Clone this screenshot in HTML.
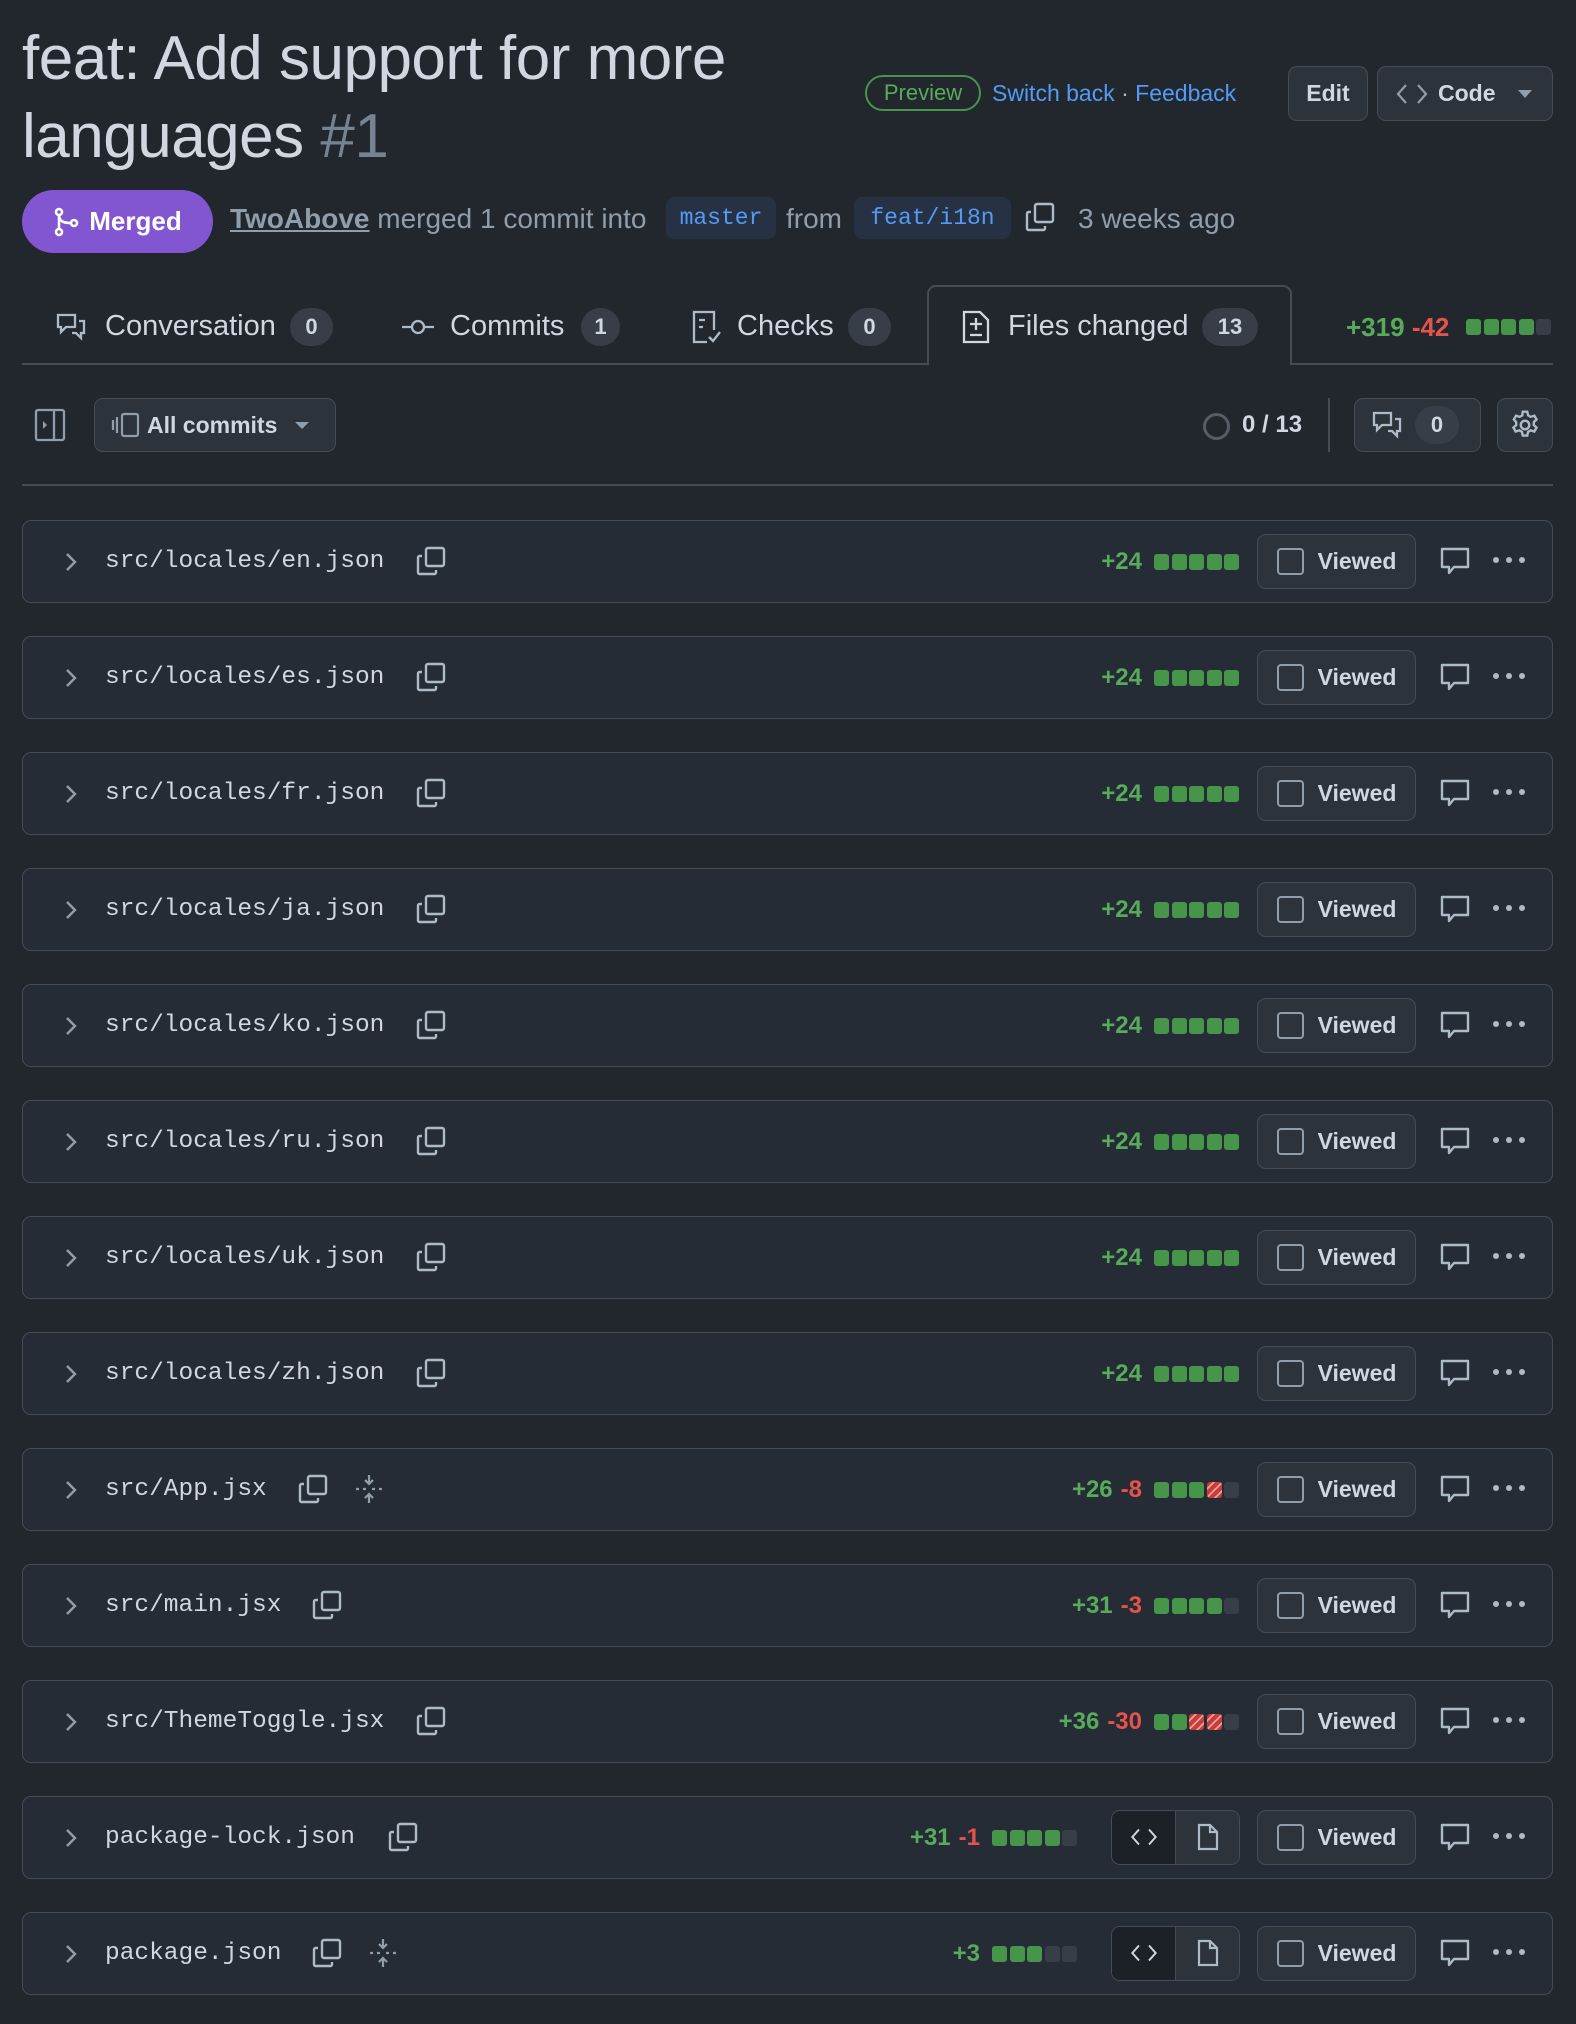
<!DOCTYPE html>
<html><head><meta charset="utf-8">
<style>
*{box-sizing:border-box;margin:0;padding:0}
body{width:1576px;height:2024px;background:#22272e;font-family:"Liberation Sans",sans-serif;color:#adbac7;position:relative;overflow:hidden}
.a{position:absolute}
.title{left:22px;top:20px;width:820px;font-size:62px;line-height:78px;color:#d1d7e0;letter-spacing:-0.5px}
.title span{color:#768390}
.pill{border-radius:999px}
.btn{border:1.5px solid #444c56;background:#2d333b;border-radius:9px;color:#d1d7e0;font-weight:bold;display:flex;align-items:center;justify-content:center}
.cnt{background:#373e47;color:#d1d7e0;border-radius:20px;font-weight:bold;font-size:22px;display:flex;align-items:center;justify-content:center;height:38px}
.mono{font-family:"Liberation Mono",monospace}
.row{position:absolute;left:22px;width:1531px;height:83px;border:1.5px solid #444c56;border-radius:9px;background:#262c35}
.row .chev{position:absolute;left:40px;top:29px}
.row .fn{position:absolute;left:82px;top:26px;font-size:24.5px;color:#d1d7e0;line-height:30px}
.row .stats{position:absolute;top:27px;display:flex;align-items:center;font-weight:bold;font-size:24px;line-height:28px}
.g{color:#57ab5a}.r{color:#e5534b;margin-left:8px}
.bar{display:flex;margin-left:12px}
.bar i{display:block;width:15px;height:16px;border-radius:3px;margin-right:2.5px;background:#46954a}
.bar i.e{background:#373e47}
.bar i.s{background:repeating-linear-gradient(135deg,#c93c37 0 4px,#e8a19e 4px 6px)}
.viewed{position:absolute;left:1234px;top:12.5px;width:159px;height:55px;font-size:23px}
.cb{width:27px;height:27px;border:2.5px solid #909dab;border-radius:4px;margin-right:14px}
.tg{position:absolute;left:1088px;top:12.5px;width:129px;height:55px;border:1.5px solid #444c56;border-radius:9px;display:flex;overflow:hidden}
.tg div{flex:1;display:flex;align-items:center;justify-content:center}
.dots{position:absolute;left:1467px;top:33px}
</style></head><body>

<div class="a title">feat: Add support for more languages <span>#1</span></div>

<div class="a pill" style="left:865px;top:75px;width:116px;height:36px;border:2px solid #46954a;color:#57ab5a;font-size:22px;display:flex;align-items:center;justify-content:center">Preview</div>
<div class="a" style="left:992px;top:78px;font-size:23px;color:#539bf5;line-height:30px">Switch back <span style="color:#adbac7">·</span> Feedback</div>
<div class="a btn" style="left:1288px;top:66px;width:80px;height:55px;font-size:23px">Edit</div>
<div class="a btn" style="left:1377px;top:66px;width:176px;height:55px;font-size:23px;justify-content:flex-start;padding-left:18px">
<svg width="32" height="24" viewBox="0 0 32 24" fill="none" stroke="#909dab" stroke-width="2.2"><path d="M10 3 2 12l8 9M22 3l8 9-8 9"/></svg>
<span style="margin-left:10px">Code</span>
<svg style="margin-left:22px" width="14" height="10" viewBox="0 0 14 10"><path d="M0 1h14L7 9z" fill="#909dab"/></svg></div>

<div class="a pill" style="left:22px;top:190px;width:191px;height:63px;background:#8256d0;color:#fff;font-weight:bold;font-size:26px;display:flex;align-items:center;justify-content:center">
<svg width="26" height="30" viewBox="0 0 26 30" fill="none" stroke="#fff" stroke-width="2.6"><circle cx="6" cy="5" r="3"/><circle cx="6" cy="25" r="3"/><circle cx="21" cy="16" r="3"/><path d="M6 8v14M6 8c0 6 4 8 12 8"/></svg>
<span style="margin-left:10px">Merged</span></div>
<div class="a" style="left:230px;top:202px;font-size:28px;line-height:34px;color:#909dab;white-space:nowrap"><span style="text-decoration:underline;font-weight:bold">TwoAbove</span> merged 1 commit into</div>
<div class="a mono" style="left:666px;top:197px;width:110px;height:42px;background:#263144;border-radius:8px;color:#539bf5;font-size:23px;display:flex;align-items:center;justify-content:center">master</div>
<div class="a" style="left:786px;top:202px;font-size:28px;line-height:34px;color:#909dab">from</div>
<div class="a mono" style="left:854px;top:197px;width:157px;height:42px;background:#263144;border-radius:8px;color:#539bf5;font-size:23px;display:flex;align-items:center;justify-content:center">feat/i18n</div>
<svg class="a" style="left:1024px;top:201px" width="32" height="32" viewBox="0 0 32 32" fill="none" stroke="#adbac7" stroke-width="2.4"><rect x="11" y="3" width="18" height="18" rx="2"/><path d="M7 11H4.5a1.5 1.5 0 0 0-1.5 1.5v15A1.5 1.5 0 0 0 4.5 29h15a1.5 1.5 0 0 0 1.5-1.5V25"/></svg>
<div class="a" style="left:1078px;top:202px;font-size:28px;line-height:34px;color:#909dab">3 weeks ago</div>

<!-- tabs -->
<div class="a" style="left:22px;top:363px;width:1531px;height:2px;background:#444c56"></div>
<div class="a" style="left:927px;top:285px;width:365px;height:80px;border:2px solid #444c56;border-bottom:none;border-radius:9px 9px 0 0;background:#22272e"></div>
<svg class="a" style="left:55px;top:311px" width="32" height="32" viewBox="0 0 32 32" fill="none" stroke="#adbac7" stroke-width="2.3"><path d="M3 4h17v12H11l-5 5v-5H3z"/><path d="M24 10h5v12h-3v5l-5-5h-4"/></svg>
<div class="a" style="left:105px;top:310px;font-size:29px;color:#d1d7e0">Conversation</div>
<div class="a cnt" style="left:290px;top:308px;width:43px">0</div>
<svg class="a" style="left:401px;top:313px" width="34" height="28" viewBox="0 0 34 28" fill="none" stroke="#adbac7" stroke-width="2.3"><circle cx="17" cy="14" r="6"/><path d="M1 14h10M23 14h10"/></svg>
<div class="a" style="left:450px;top:310px;font-size:29px;color:#d1d7e0">Commits</div>
<div class="a cnt" style="left:581px;top:308px;width:39px">1</div>
<svg class="a" style="left:690px;top:309px" width="32" height="36" viewBox="0 0 32 36" fill="none" stroke="#adbac7" stroke-width="2.3"><path d="M17 33H4V3h20v18"/><path d="M9 11h6M9 18h4M19 28l4 4 7-9"/></svg>
<div class="a" style="left:737px;top:310px;font-size:29px;color:#d1d7e0">Checks</div>
<div class="a cnt" style="left:848px;top:308px;width:43px">0</div>
<svg class="a" style="left:961px;top:309px" width="30" height="36" viewBox="0 0 30 36" fill="none" stroke="#d1d7e0" stroke-width="2.3"><path d="M3 3h16l8 8v22H3z"/><path d="M15 9v12M9 15h12M9 26h12"/></svg>
<div class="a" style="left:1008px;top:310px;font-size:29px;color:#d1d7e0">Files changed</div>
<div class="a cnt" style="left:1202px;top:308px;width:56px">13</div>
<div class="a" style="left:1346px;top:312px;font-size:26px;font-weight:bold;line-height:30px"><span class="g">+319</span> <span style="color:#e5534b">-42</span></div>
<div class="a bar" style="left:1454px;top:319px"><i></i><i></i><i></i><i></i><i class="e"></i></div>

<!-- toolbar -->
<svg class="a" style="left:34px;top:408px" width="32" height="34" viewBox="0 0 32 34" fill="none" stroke="#909dab" stroke-width="2.3"><rect x="2" y="2" width="28" height="30" rx="2"/><path d="M20 2v30"/><path d="M9 13l4 4-4 4z" fill="#909dab" stroke="none"/></svg>
<div class="a btn" style="left:94px;top:398px;width:242px;height:54px;font-size:23px;justify-content:flex-start;padding-left:16px">
<svg width="30" height="26" viewBox="0 0 30 26" fill="none" stroke="#909dab" stroke-width="2.2"><path d="M2 8v10M6 5v16"/><rect x="11" y="2" width="16" height="22" rx="2"/></svg>
<span style="margin-left:6px">All commits</span>
<svg style="margin-left:18px" width="14" height="9" viewBox="0 0 14 9"><path d="M0 1h14L7 8z" fill="#909dab"/></svg></div>
<div class="a" style="left:1203px;top:413px;width:27px;height:27px;border:3.5px solid #545d68;border-radius:50%"></div>
<div class="a" style="left:1242px;top:411px;font-size:24px;color:#d1d7e0;font-weight:bold">0 / 13</div>
<div class="a" style="left:1328px;top:398px;width:2px;height:54px;background:#444c56"></div>
<div class="a btn" style="left:1354px;top:398px;width:127px;height:54px;justify-content:flex-start;padding-left:16px">
<svg width="32" height="32" viewBox="0 0 32 32" fill="none" stroke="#adbac7" stroke-width="2.3"><path d="M3 4h17v12H11l-5 5v-5H3z"/><path d="M24 10h5v12h-3v5l-5-5h-4"/></svg>
<div class="cnt" style="margin-left:12px;width:44px">0</div></div>
<div class="a btn" style="left:1497px;top:398px;width:56px;height:54px">
<svg width="32" height="32" viewBox="0 0 24 24" fill="none" stroke="#adbac7" stroke-width="1.8"><circle cx="12" cy="12" r="3.2"/><path d="M10.3 2h3.4l.6 2.8 2 1.1 2.7-.9 1.7 2.9-2.1 1.9v2.3l2.1 1.9-1.7 2.9-2.7-.9-2 1.1-.6 2.8h-3.4l-.6-2.8-2-1.1-2.7.9-1.7-2.9 2.1-1.9v-2.3L3.6 7.9l1.7-2.9 2.7.9 2-1.1z"/></svg></div>
<div class="a" style="left:22px;top:484px;width:1531px;height:2px;background:#444c56"></div>

<svg width="0" height="0" style="position:absolute"><defs>
<symbol id="chev" viewBox="0 0 16 24"><path d="M4 4l8 8-8 8" fill="none" stroke="#909dab" stroke-width="2.4"/></symbol>
<symbol id="copy" viewBox="0 0 32 32"><g fill="none" stroke="#adbac7" stroke-width="2.4"><rect x="11" y="3" width="18" height="18" rx="2"/><path d="M7 11H4.5a1.5 1.5 0 0 0-1.5 1.5v15A1.5 1.5 0 0 0 4.5 29h15a1.5 1.5 0 0 0 1.5-1.5V25"/></g></symbol>
<symbol id="exp" viewBox="0 0 32 32"><g fill="none" stroke="#909dab" stroke-width="2.2"><path d="M16 2v9M12 7l4 4 4-4M16 30v-9M12 25l4-4 4 4"/><path d="M3 16h3M10 16h3M19 16h3M26 16h3"/></g></symbol>
<symbol id="cmt" viewBox="0 0 32 32"><path d="M3 4h26v18H15l-5 6v-6H3z" fill="none" stroke="#adbac7" stroke-width="2.4" stroke-linejoin="round"/></symbol>
<symbol id="dots" viewBox="0 0 40 12"><g fill="#adbac7"><circle cx="6" cy="6" r="3"/><circle cx="19" cy="6" r="3"/><circle cx="32" cy="6" r="3"/></g></symbol>
</defs></svg>

<div class="row" style="top:520px"><svg class="chev" width="16" height="24"><use href="#chev"/></svg><div class="fn mono">src/locales/en.json</div><svg class="a" style="left:392px;top:24px" width="32" height="32"><use href="#copy"/></svg><div class="stats" style="right:313px"><span class="g">+24</span><div class="bar"><i></i><i></i><i></i><i></i><i style="margin-right:0"></i></div></div><div class="viewed btn"><div class="cb"></div>Viewed</div><svg class="a" style="left:1416px;top:24px" width="32" height="32"><use href="#cmt"/></svg><svg class="dots" width="40" height="12"><use href="#dots"/></svg></div>
<div class="row" style="top:636px"><svg class="chev" width="16" height="24"><use href="#chev"/></svg><div class="fn mono">src/locales/es.json</div><svg class="a" style="left:392px;top:24px" width="32" height="32"><use href="#copy"/></svg><div class="stats" style="right:313px"><span class="g">+24</span><div class="bar"><i></i><i></i><i></i><i></i><i style="margin-right:0"></i></div></div><div class="viewed btn"><div class="cb"></div>Viewed</div><svg class="a" style="left:1416px;top:24px" width="32" height="32"><use href="#cmt"/></svg><svg class="dots" width="40" height="12"><use href="#dots"/></svg></div>
<div class="row" style="top:752px"><svg class="chev" width="16" height="24"><use href="#chev"/></svg><div class="fn mono">src/locales/fr.json</div><svg class="a" style="left:392px;top:24px" width="32" height="32"><use href="#copy"/></svg><div class="stats" style="right:313px"><span class="g">+24</span><div class="bar"><i></i><i></i><i></i><i></i><i style="margin-right:0"></i></div></div><div class="viewed btn"><div class="cb"></div>Viewed</div><svg class="a" style="left:1416px;top:24px" width="32" height="32"><use href="#cmt"/></svg><svg class="dots" width="40" height="12"><use href="#dots"/></svg></div>
<div class="row" style="top:868px"><svg class="chev" width="16" height="24"><use href="#chev"/></svg><div class="fn mono">src/locales/ja.json</div><svg class="a" style="left:392px;top:24px" width="32" height="32"><use href="#copy"/></svg><div class="stats" style="right:313px"><span class="g">+24</span><div class="bar"><i></i><i></i><i></i><i></i><i style="margin-right:0"></i></div></div><div class="viewed btn"><div class="cb"></div>Viewed</div><svg class="a" style="left:1416px;top:24px" width="32" height="32"><use href="#cmt"/></svg><svg class="dots" width="40" height="12"><use href="#dots"/></svg></div>
<div class="row" style="top:984px"><svg class="chev" width="16" height="24"><use href="#chev"/></svg><div class="fn mono">src/locales/ko.json</div><svg class="a" style="left:392px;top:24px" width="32" height="32"><use href="#copy"/></svg><div class="stats" style="right:313px"><span class="g">+24</span><div class="bar"><i></i><i></i><i></i><i></i><i style="margin-right:0"></i></div></div><div class="viewed btn"><div class="cb"></div>Viewed</div><svg class="a" style="left:1416px;top:24px" width="32" height="32"><use href="#cmt"/></svg><svg class="dots" width="40" height="12"><use href="#dots"/></svg></div>
<div class="row" style="top:1100px"><svg class="chev" width="16" height="24"><use href="#chev"/></svg><div class="fn mono">src/locales/ru.json</div><svg class="a" style="left:392px;top:24px" width="32" height="32"><use href="#copy"/></svg><div class="stats" style="right:313px"><span class="g">+24</span><div class="bar"><i></i><i></i><i></i><i></i><i style="margin-right:0"></i></div></div><div class="viewed btn"><div class="cb"></div>Viewed</div><svg class="a" style="left:1416px;top:24px" width="32" height="32"><use href="#cmt"/></svg><svg class="dots" width="40" height="12"><use href="#dots"/></svg></div>
<div class="row" style="top:1216px"><svg class="chev" width="16" height="24"><use href="#chev"/></svg><div class="fn mono">src/locales/uk.json</div><svg class="a" style="left:392px;top:24px" width="32" height="32"><use href="#copy"/></svg><div class="stats" style="right:313px"><span class="g">+24</span><div class="bar"><i></i><i></i><i></i><i></i><i style="margin-right:0"></i></div></div><div class="viewed btn"><div class="cb"></div>Viewed</div><svg class="a" style="left:1416px;top:24px" width="32" height="32"><use href="#cmt"/></svg><svg class="dots" width="40" height="12"><use href="#dots"/></svg></div>
<div class="row" style="top:1332px"><svg class="chev" width="16" height="24"><use href="#chev"/></svg><div class="fn mono">src/locales/zh.json</div><svg class="a" style="left:392px;top:24px" width="32" height="32"><use href="#copy"/></svg><div class="stats" style="right:313px"><span class="g">+24</span><div class="bar"><i></i><i></i><i></i><i></i><i style="margin-right:0"></i></div></div><div class="viewed btn"><div class="cb"></div>Viewed</div><svg class="a" style="left:1416px;top:24px" width="32" height="32"><use href="#cmt"/></svg><svg class="dots" width="40" height="12"><use href="#dots"/></svg></div>
<div class="row" style="top:1448px"><svg class="chev" width="16" height="24"><use href="#chev"/></svg><div class="fn mono">src/App.jsx</div><svg class="a" style="left:274px;top:24px" width="32" height="32"><use href="#copy"/></svg><svg class="a" style="left:330px;top:24px" width="32" height="32"><use href="#exp"/></svg><div class="stats" style="right:313px"><span class="g">+26</span><span class="r">-8</span><div class="bar"><i></i><i></i><i></i><i class="s"></i><i class="e" style="margin-right:0"></i></div></div><div class="viewed btn"><div class="cb"></div>Viewed</div><svg class="a" style="left:1416px;top:24px" width="32" height="32"><use href="#cmt"/></svg><svg class="dots" width="40" height="12"><use href="#dots"/></svg></div>
<div class="row" style="top:1564px"><svg class="chev" width="16" height="24"><use href="#chev"/></svg><div class="fn mono">src/main.jsx</div><svg class="a" style="left:288px;top:24px" width="32" height="32"><use href="#copy"/></svg><div class="stats" style="right:313px"><span class="g">+31</span><span class="r">-3</span><div class="bar"><i></i><i></i><i></i><i></i><i class="e" style="margin-right:0"></i></div></div><div class="viewed btn"><div class="cb"></div>Viewed</div><svg class="a" style="left:1416px;top:24px" width="32" height="32"><use href="#cmt"/></svg><svg class="dots" width="40" height="12"><use href="#dots"/></svg></div>
<div class="row" style="top:1680px"><svg class="chev" width="16" height="24"><use href="#chev"/></svg><div class="fn mono">src/ThemeToggle.jsx</div><svg class="a" style="left:392px;top:24px" width="32" height="32"><use href="#copy"/></svg><div class="stats" style="right:313px"><span class="g">+36</span><span class="r">-30</span><div class="bar"><i></i><i></i><i class="s"></i><i class="s"></i><i class="e" style="margin-right:0"></i></div></div><div class="viewed btn"><div class="cb"></div>Viewed</div><svg class="a" style="left:1416px;top:24px" width="32" height="32"><use href="#cmt"/></svg><svg class="dots" width="40" height="12"><use href="#dots"/></svg></div>
<div class="row" style="top:1796px"><svg class="chev" width="16" height="24"><use href="#chev"/></svg><div class="fn mono">package-lock.json</div><svg class="a" style="left:364px;top:24px" width="32" height="32"><use href="#copy"/></svg><div class="stats" style="right:475px"><span class="g">+31</span><span class="r">-1</span><div class="bar"><i></i><i></i><i></i><i></i><i class="e" style="margin-right:0"></i></div></div><div class="tg"><div style="background:#1c2128"><svg width="28" height="20" viewBox="0 0 32 24" fill="none" stroke="#d1d7e0" stroke-width="2.4"><path d="M10 3 2 12l8 9M22 3l8 9-8 9"/></svg></div><div style="border-left:1.5px solid #444c56;background:#2d333b"><svg width="22" height="28" viewBox="0 0 22 28" fill="none" stroke="#adbac7" stroke-width="2.2"><path d="M2 2h11l7 7v17H2z M13 2v7h7"/></svg></div></div><div class="viewed btn"><div class="cb"></div>Viewed</div><svg class="a" style="left:1416px;top:24px" width="32" height="32"><use href="#cmt"/></svg><svg class="dots" width="40" height="12"><use href="#dots"/></svg></div>
<div class="row" style="top:1912px"><svg class="chev" width="16" height="24"><use href="#chev"/></svg><div class="fn mono">package.json</div><svg class="a" style="left:288px;top:24px" width="32" height="32"><use href="#copy"/></svg><svg class="a" style="left:344px;top:24px" width="32" height="32"><use href="#exp"/></svg><div class="stats" style="right:475px"><span class="g">+3</span><div class="bar"><i></i><i></i><i></i><i class="e"></i><i class="e" style="margin-right:0"></i></div></div><div class="tg"><div style="background:#1c2128"><svg width="28" height="20" viewBox="0 0 32 24" fill="none" stroke="#d1d7e0" stroke-width="2.4"><path d="M10 3 2 12l8 9M22 3l8 9-8 9"/></svg></div><div style="border-left:1.5px solid #444c56;background:#2d333b"><svg width="22" height="28" viewBox="0 0 22 28" fill="none" stroke="#adbac7" stroke-width="2.2"><path d="M2 2h11l7 7v17H2z M13 2v7h7"/></svg></div></div><div class="viewed btn"><div class="cb"></div>Viewed</div><svg class="a" style="left:1416px;top:24px" width="32" height="32"><use href="#cmt"/></svg><svg class="dots" width="40" height="12"><use href="#dots"/></svg></div>

</body></html>
